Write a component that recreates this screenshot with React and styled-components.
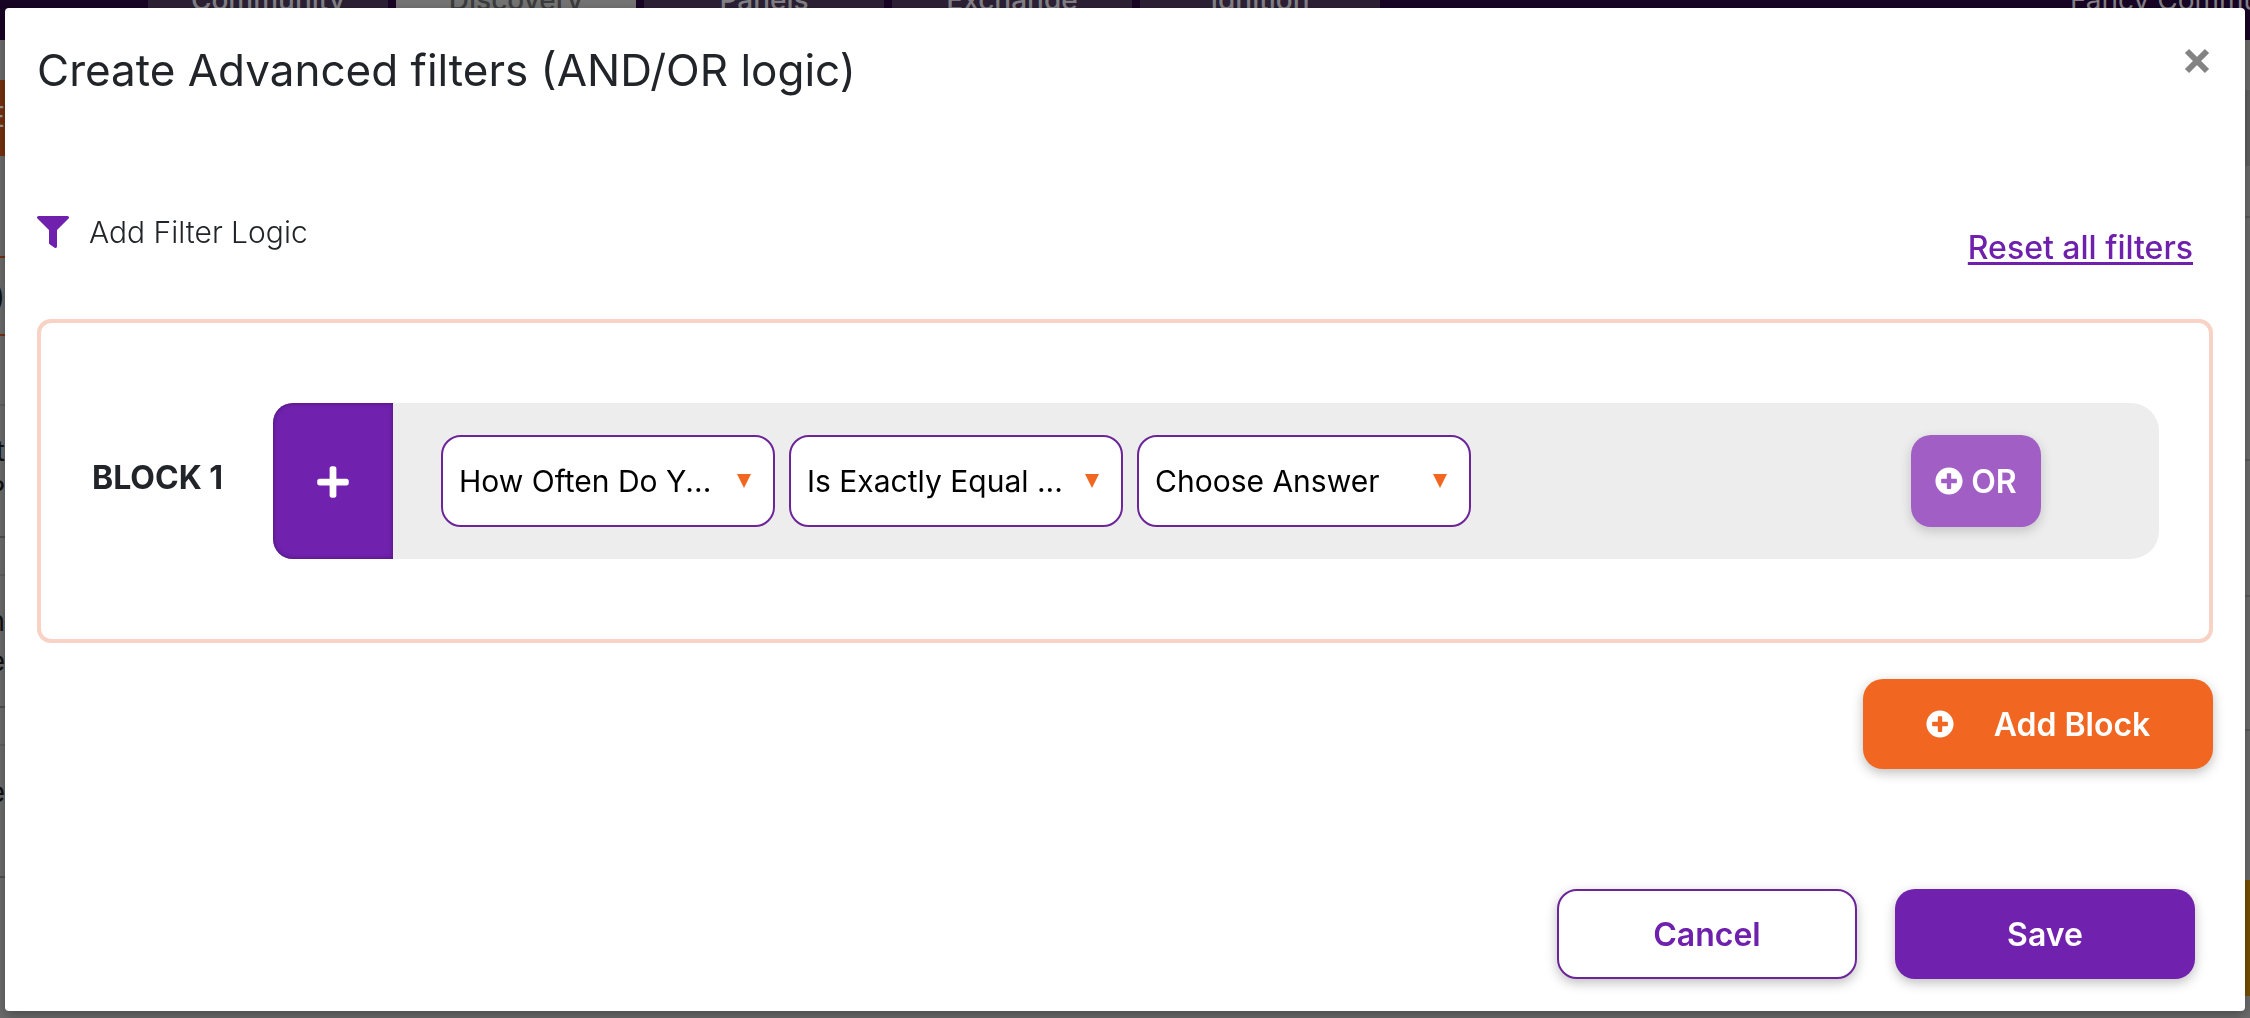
import styled, { createGlobalStyle } from 'styled-components';
import { FaFilter, FaPlus, FaPlusCircle } from 'react-icons/fa';

const GlobalStyle = createGlobalStyle`
	* {
		box-sizing: border-box;
	}

	body {
		margin: 0;
		overflow: hidden;
		color: #212529;
		font-family: Inter, 'Liberation Sans', sans-serif;
		font-size: 30px;
	}

	button, select {
		font-family: inherit;
		font-size: inherit;
	}
`;

/* page under the backdrop */

const Page = styled.div`
	height: 100vh;
	display: flex;
	flex-direction: column;
	overflow: hidden;
	background: #6c6c6c;
`;

const Navbar = styled.nav`
	display: flex;
	align-items: flex-end;
	gap: 8px;
	height: 40px;
	flex-shrink: 0;
	padding-left: 148px;
	background: #180424;
	overflow: hidden;
`;

const NavTab = styled.a`
	display: flex;
	justify-content: center;
	align-items: flex-end;
	width: 240px;
	height: 80px;
	padding-bottom: 22px;
	background: ${(props) => (props.$active ? '#747474' : '#2c2035')};
	color: ${(props) => (props.$active ? '#3c3c3c' : '#828085')};
	font-size: 28px;
	font-weight: 500;
	line-height: 36px;
	text-decoration: none;
`;

const NavUser = styled.span`
	width: 180px;
	height: 80px;
	margin-left: auto;
	padding-top: 22px;
	color: #828085;
	font-size: 28px;
	line-height: 36px;
	white-space: nowrap;
`;

const Columns = styled.div`
	flex: 1;
	display: flex;
	justify-content: space-between;
`;

const Column = styled.div`
	width: 5px;
	display: flex;
	flex-direction: column;
	overflow: hidden;
`;

const Strip = styled.div`
	display: flex;
	flex-direction: column;
	align-items: flex-end;
	justify-content: ${(props) => (props.$top ? 'flex-start' : 'center')};
	flex-shrink: 0;
	height: ${(props) => props.$height}px;
	padding-top: ${(props) => (props.$top ? 26 : 0)}px;
	background: ${(props) => props.$color || '#6c6c6c'};
	border-bottom: 2px solid ${(props) => props.$line || 'transparent'};
	color: ${(props) => props.$text || '#111'};
	font-size: 28px;
	line-height: 40px;
`;

/* modal */

const Backdrop = styled.div`
	position: fixed;
	inset: 0;
	display: flex;
	padding: 8px 5px 7px;
`;

const Modal = styled.section`
	flex: 1;
	display: flex;
	flex-direction: column;
	background: #fff;
	border-radius: 4px;
	box-shadow: 0 4px 12px rgba(0, 0, 0, 0.3);
`;

const ModalHeader = styled.header`
	display: flex;
	justify-content: space-between;
	align-items: flex-start;
	padding: 29px 24px 0 32px;
`;

const Title = styled.h1`
	margin: 0;
	font-size: 44px;
	font-weight: 400;
	line-height: 66px;
`;

const CloseButton = styled.button`
	display: flex;
	justify-content: center;
	align-items: center;
	width: 48px;
	height: 48px;
	padding: 0;
	border: none;
	background: none;
	color: #838383;
	cursor: pointer;
`;

const ModalBody = styled.div`
	flex: 1;
	display: flex;
	flex-direction: column;
	padding: 105px 32px 32px;
`;

const Toolbar = styled.div`
	display: flex;
	justify-content: space-between;
	align-items: flex-start;
	padding-right: 20px;
`;

const ToolbarLabel = styled.div`
	display: flex;
	align-items: center;
	gap: 20px;
	font-weight: 300;
	line-height: 48px;

	svg {
		color: #6f20ac;
	}
`;

const ResetLink = styled.a`
	margin-top: 16px;
	color: #6f20ac;
	font-size: 32px;
	font-weight: 500;
	line-height: 48px;
	text-decoration-thickness: 3px;
	text-underline-offset: 3px;
	text-decoration-skip-ink: none;
`;

const Block = styled.div`
	display: flex;
	align-items: center;
	margin-top: 47px;
	padding: 80px 50px 80px 51px;
	border: 4px solid #f8d2c4;
	border-radius: 14px;
`;

const BlockName = styled.h2`
	width: 181px;
	margin: 0;
	padding-bottom: 8px;
	font-size: 32px;
	font-weight: 700;
`;

const Rule = styled.div`
	flex: 1;
	display: flex;
	background: #ededed;
	border-radius: 20px 28px 28px 20px;
`;

const AddRuleButton = styled.button`
	display: flex;
	justify-content: center;
	align-items: center;
	width: 120px;
	padding: 2px 0 0;
	border: none;
	border-radius: 20px 0 0 20px;
	background: #7021ad;
	box-shadow: inset 0 0 4px #45146e;
	color: #fff;
	cursor: pointer;
`;

const RuleFields = styled.div`
	flex: 1;
	display: flex;
	gap: 14px;
	padding: 32px 118px 32px 48px;
`;

const SelectBox = styled.label`
	display: grid;
	align-items: center;
	width: 334px;

	select, svg {
		grid-area: 1 / 1;
	}

	svg {
		justify-self: end;
		margin-right: 24px;
		pointer-events: none;
	}
`;

const Select = styled.select`
	appearance: none;
	width: 100%;
	height: 92px;
	padding: 0 48px 0 16px;
	border: 2px solid #6c2599;
	border-radius: 20px;
	background: #fff;
	color: #000;
`;

const Button = styled.button`
	display: flex;
	justify-content: center;
	align-items: center;
	gap: ${(props) => props.$gap || 0}px;
	width: ${(props) => props.$width}px;
	height: 90px;
	padding: 0;
	border: ${(props) => (props.$outline ? '2px solid #6c2599' : 'none')};
	border-radius: 20px;
	background: ${(props) => props.$color || '#fff'};
	box-shadow: 0 4px 12px rgba(0, 0, 0, 0.25);
	color: ${(props) => (props.$outline ? '#6f20ac' : '#fff')};
	font-size: 32px;
	font-weight: 600;
	cursor: pointer;
`;

const OrButton = styled(Button)`
	height: 92px;
	margin-left: auto;
	box-shadow: 0 4px 12px rgba(0, 0, 0, 0.18);
`;

const AddBlockRow = styled.div`
	display: flex;
	justify-content: flex-end;
	margin-top: 36px;
`;

const ModalFooter = styled.footer`
	display: flex;
	justify-content: flex-end;
	gap: 38px;
	margin-top: auto;
	padding-right: 18px;
`;

const tabs = ['Community', 'Discovery', 'Panels', 'Exchange', 'Ignition'];

const filters = [
	{ name: 'Question', value: 'How Often Do Y...' },
	{ name: 'Condition', value: 'Is Exactly Equal ...' },
	{ name: 'Answer', value: 'Choose Answer' },
];

const Dropdown = ({ name, value }) => (
	<SelectBox>
		<Select aria-label={name}>
			<option>{value}</option>
		</Select>
		<svg width="14" height="14" viewBox="0 0 14 14">
			<path d="M0 0h14L7 14z" fill="#f16722" />
		</svg>
	</SelectBox>
);

const Background = () => (
	<Page>
		<Navbar>
			{tabs.map((tab) => (
				<NavTab key={tab} href="#" $active={tab === 'Discovery'}>
					{tab}
				</NavTab>
			))}
			<NavUser>Fancy Commu</NavUser>
		</Navbar>
		<Columns>
			<Column>
				<Strip $height={40} />
				<Strip $height={76} $color="#76300f" $line="#76300f" $text="#999">
					<span>E</span>
				</Strip>
				<Strip $height={102} $line="#76300f" />
				<Strip $height={78} $line="#76300f">
					<span>)</span>
				</Strip>
				<Strip $height={70} $line="#606060" />
				<Strip $height={132} $line="#505050">
					<span>t</span>
					<span>?</span>
				</Strip>
				<Strip $height={38} $line="#606060" />
				<Strip $height={132} $line="#505050">
					<span>n</span>
					<span>e</span>
				</Strip>
				<Strip $height={38} $line="#606060" />
				<Strip $height={132} $line="#505050" $top>
					<span>e</span>
				</Strip>
			</Column>
			<Column>
				<Strip $height={50} />
				<Strip $height={76} $color="#606060" />
				<Strip $height={52} $line="#5a5a5a" />
				<Strip $height={243} $line="#5a5a5a" />
				<Strip $height={136} $line="#5a5a5a" />
				<Strip $height={134} $line="#5a5a5a" />
				<Strip $height={149} />
				<Strip $height={116} $color="#765000" $line="#765000" />
			</Column>
		</Columns>
	</Page>
);

const App = () => {
	return (
		<>
			<GlobalStyle />
			<Background />
			<Backdrop>
				<Modal role="dialog" aria-labelledby="modal-title">
					<ModalHeader>
						<Title id="modal-title">
							Create Advanced filters (AND/OR logic)
						</Title>
						<CloseButton aria-label="Close">
							<svg width="26" height="26" viewBox="0 0 26 26">
								<path
									d="M3 3l20 20M23 3L3 23"
									stroke="currentColor"
									strokeWidth="6"
								/>
							</svg>
						</CloseButton>
					</ModalHeader>
					<ModalBody>
						<Toolbar>
							<ToolbarLabel>
								<FaFilter size={32} />
								Add Filter Logic
							</ToolbarLabel>
							<ResetLink href="#">Reset all filters</ResetLink>
						</Toolbar>
						<Block>
							<BlockName>BLOCK 1</BlockName>
							<Rule>
								<AddRuleButton aria-label="Add rule">
									<FaPlus size={36} />
								</AddRuleButton>
								<RuleFields>
									{filters.map((filter) => (
										<Dropdown key={filter.name} {...filter} />
									))}
									<OrButton $width={130} $color="#a15fc6" $gap={8}>
										<FaPlusCircle size={28} />
										OR
									</OrButton>
								</RuleFields>
							</Rule>
						</Block>
						<AddBlockRow>
							<Button $width={350} $color="#f16722" $gap={40}>
								<FaPlusCircle size={28} />
								Add Block
							</Button>
						</AddBlockRow>
						<ModalFooter>
							<Button $width={300} $outline>
								Cancel
							</Button>
							<Button $width={300} $color="#7021ad">
								Save
							</Button>
						</ModalFooter>
					</ModalBody>
				</Modal>
			</Backdrop>
		</>
	);
};

export default App;
